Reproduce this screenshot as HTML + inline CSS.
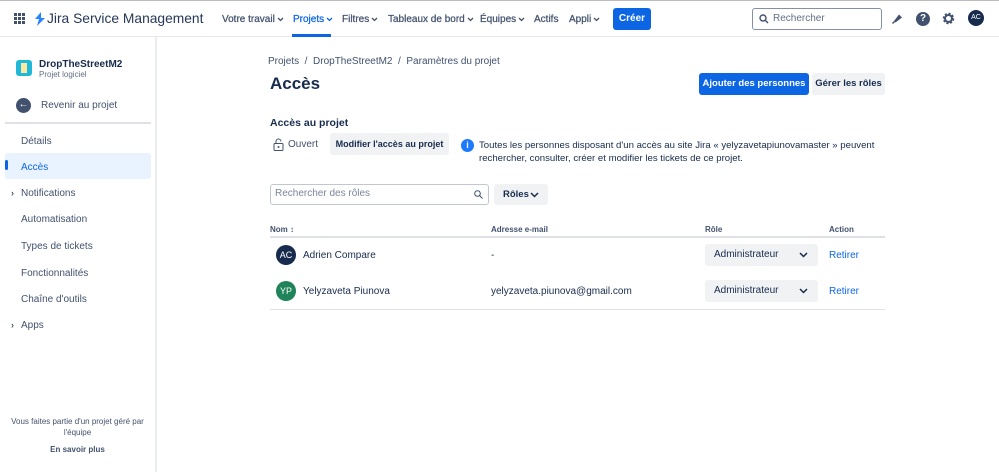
<!DOCTYPE html>
<html><head><meta charset="utf-8"><style>
*{box-sizing:border-box;margin:0;padding:0}
body{width:999px;height:472px;overflow:hidden;font-family:"Liberation Sans",sans-serif;color:#172b4d;background:#fff;position:relative;font-size:11px}
.abs{position:absolute;white-space:nowrap}
.top{position:absolute;left:0;top:0;width:999px;height:37px;border-top:1px solid #bbb;border-bottom:1px solid #e5e7ea}
.nav{position:absolute;top:13px;font-size:10px;color:#42526e;white-space:nowrap;-webkit-text-stroke:0.25px #42526e}
.ch{display:inline-block;vertical-align:middle;margin-left:2px}
.side{position:absolute;left:0;top:37px;width:157px;height:435px;border-right:2px solid #ebecf0}
.si{position:absolute;left:21px;font-size:10px;color:#42526e;white-space:nowrap}
.btn{position:absolute;background:#f1f2f4;border-radius:3px;font-weight:bold;font-size:9.5px;color:#172b4d;text-align:center;white-space:nowrap}
.av{position:absolute;width:20px;height:20px;border-radius:50%;color:#fff;font-size:9px;text-align:center;line-height:20px}
</style></head><body>
<div class="top">
<svg class="abs" style="left:14px;top:12px" width="11" height="11"><g fill="#42526e"><rect x="0" y="0" width="3" height="3"/><rect x="4" y="0" width="3" height="3"/><rect x="8" y="0" width="3" height="3"/><rect x="0" y="4" width="3" height="3"/><rect x="4" y="4" width="3" height="3"/><rect x="8" y="4" width="3" height="3"/><rect x="0" y="8" width="3" height="3"/><rect x="4" y="8" width="3" height="3"/><rect x="8" y="8" width="3" height="3"/></g></svg>
<svg class="abs" style="left:34px;top:11px" width="12" height="14"><path d="M7 0L1 7h4L3 14l8-8H7z" fill="#2684ff"/></svg>
<div class="abs" style="left:47px;top:10px;font-size:13.8px;color:#253858">Jira Service Management</div>
<div class="nav" style="left:222px">Votre travail<svg class="ch" width="7" height="5"><path d="M1 1l2.5 2.5L6 1" stroke="#42526e" stroke-width="1.3" fill="none"/></svg></div>
<div class="nav" style="left:293px;color:#0c66e4;-webkit-text-stroke-color:#0c66e4">Projets<svg class="ch" width="7" height="5"><path d="M1 1l2.5 2.5L6 1" stroke="#0c66e4" stroke-width="1.3" fill="none"/></svg></div>
<div class="abs" style="left:292px;top:33px;width:39px;height:3px;background:#0c66e4"></div>
<div class="nav" style="left:342px">Filtres<svg class="ch" width="7" height="5"><path d="M1 1l2.5 2.5L6 1" stroke="#42526e" stroke-width="1.3" fill="none"/></svg></div>
<div class="nav" style="left:388px">Tableaux de bord<svg class="ch" width="7" height="5"><path d="M1 1l2.5 2.5L6 1" stroke="#42526e" stroke-width="1.3" fill="none"/></svg></div>
<div class="nav" style="left:480px">Équipes<svg class="ch" width="7" height="5"><path d="M1 1l2.5 2.5L6 1" stroke="#42526e" stroke-width="1.3" fill="none"/></svg></div>
<div class="nav" style="left:534px">Actifs</div>
<div class="nav" style="left:569px">Appli<svg class="ch" width="7" height="5"><path d="M1 1l2.5 2.5L6 1" stroke="#42526e" stroke-width="1.3" fill="none"/></svg></div>
<div class="abs" style="left:613px;top:7px;width:38px;height:22px;background:#0c66e4;border-radius:3px;color:#fff;font-weight:bold;font-size:10px;text-align:center;line-height:22px">Créer</div>
<div class="abs" style="left:752px;top:7px;width:130px;height:22px;border:1.5px solid #8590a2;border-radius:3px;color:#626f86;font-size:10px;line-height:19px;padding-left:20px">Rechercher</div>
<svg class="abs" style="left:759px;top:13px" width="10" height="10"><circle cx="4" cy="4" r="3" stroke="#42526e" stroke-width="1.4" fill="none"/><path d="M6.5 6.5L9 9" stroke="#42526e" stroke-width="1.4"/></svg>
<svg class="abs" style="left:891px;top:11px" width="13" height="13"><path d="M3 9L8 2.5l3 3-6.5 5z" fill="#42526e"/><path d="M1.5 11.5l2-2" stroke="#42526e" stroke-width="1.5"/></svg>
<div class="abs" style="left:916px;top:11px;width:14px;height:14px;border-radius:50%;background:#42526e;color:#fff;font-size:10px;font-weight:bold;text-align:center;line-height:14px">?</div>
<svg class="abs" style="left:941px;top:10px" width="15" height="15"><circle cx="7.5" cy="7.5" r="4.5" fill="none" stroke="#42526e" stroke-width="2.5" stroke-dasharray="2 1.5"/><circle cx="7.5" cy="7.5" r="3.5" fill="none" stroke="#42526e" stroke-width="2"/></svg>
<div class="av" style="left:968px;top:9px;width:16px;height:16px;line-height:16px;font-size:7px;background:#172b4d">AC</div>
</div>
<div class="side">
<div class="abs" style="left:16px;top:23px;width:16px;height:16px;background:#1fb8d8;border-radius:3px"></div>
<div class="abs" style="left:21px;top:26px;width:6px;height:10px;background:#ffe7a0"></div>
<div class="abs" style="left:39px;top:22px;font-size:10px;font-weight:bold">DropTheStreetM2</div>
<div class="abs" style="left:39px;top:33px;font-size:8px;color:#626f86">Projet logiciel</div>
<div class="abs" style="left:16px;top:61px;width:15px;height:15px;border-radius:50%;background:#42526e;color:#fff;font-size:10px;text-align:center;line-height:14px">←</div>
<div class="si" style="left:41px;top:63px">Revenir au projet</div>
<div class="abs" style="left:5px;top:85px;width:146px;height:2px;background:#dfe1e6"></div>
<div class="si" style="top:99px">Détails</div>
<div class="abs" style="left:5px;top:116px;width:146px;height:26px;background:#e9f2ff;border-radius:3px"></div>
<div class="abs" style="left:5px;top:123px;width:3px;height:10px;background:#0c66e4;border-radius:2px"></div>
<div class="si" style="top:125px;color:#0c66e4">Accès</div>
<div class="si" style="top:151px"><span style="position:absolute;left:-10px;font-size:9px;font-weight:bold">›</span>Notifications</div>
<div class="si" style="top:177px">Automatisation</div>
<div class="si" style="top:204px">Types de tickets</div>
<div class="si" style="top:231px">Fonctionnalités</div>
<div class="si" style="top:257px">Chaîne d'outils</div>
<div class="si" style="top:283px"><span style="position:absolute;left:-10px;font-size:9px;font-weight:bold">›</span>Apps</div>
<div class="abs" style="left:0;top:379px;width:155px;text-align:center;font-size:8px;color:#42526e;line-height:11px">Vous faites partie d'un projet géré par<br>l'équipe</div>
<div class="abs" style="left:0;top:408px;width:155px;text-align:center;font-size:8px;font-weight:bold;color:#42526e">En savoir plus</div>
</div>
<div class="abs" style="left:268px;top:56px;font-size:10px;color:#42526e">Projets &nbsp;/ &nbsp;DropTheStreetM2 &nbsp;/ &nbsp;Paramètres du projet</div>
<div class="abs" style="left:270px;top:74px;font-size:17px;font-weight:bold">Accès</div>
<div class="abs" style="left:699px;top:73px;width:110px;height:22px;background:#0c66e4;border-radius:3px;color:#fff;font-weight:bold;font-size:9.5px;text-align:center;line-height:22px">Ajouter des personnes</div>
<div class="btn" style="left:812px;top:73px;width:73px;height:22px;line-height:22px">Gérer les rôles</div>
<div class="abs" style="left:270px;top:117px;font-size:10.5px;font-weight:bold">Accès au projet</div>
<svg class="abs" style="left:273px;top:138px" width="11" height="13"><rect x="1" y="5.5" width="9" height="7" rx="1" fill="none" stroke="#42526e"/><path d="M3 5.5V3.5a2.5 2.5 0 015 0" fill="none" stroke="#42526e"/><circle cx="5.5" cy="9" r="1" fill="#42526e"/></svg>
<div class="abs" style="left:288px;top:139px;font-size:10px;color:#42526e">Ouvert</div>
<div class="btn" style="left:330px;top:133px;width:119px;height:22px;line-height:22px;font-size:9px">Modifier l'accès au projet</div>
<div class="abs" style="left:461px;top:139px;width:13px;height:13px;border-radius:50%;background:#1d7afc;color:#fff;font-size:9px;font-weight:bold;text-align:center;line-height:13px">i</div>
<div class="abs" style="left:479px;top:139px;font-size:9.6px;color:#172b4d;line-height:13px">Toutes les personnes disposant d'un accès au site Jira « yelyzavetapiunovamaster » peuvent<br>rechercher, consulter, créer et modifier les tickets de ce projet.</div>
<div class="abs" style="left:270px;top:184px;width:219px;height:21px;border:1.5px solid #c1c7d0;border-radius:3px;font-size:10px;color:#7a869a;padding-left:4px;line-height:18px">Rechercher des rôles</div>
<svg class="abs" style="left:474px;top:190px" width="9" height="9"><circle cx="3.5" cy="3.5" r="2.8" stroke="#42526e" fill="none"/><path d="M5.5 5.5L8.5 8.5" stroke="#42526e"/></svg>
<div class="btn" style="left:494px;top:184px;width:54px;height:21px;line-height:21px;text-align:left;padding-left:9px">Rôles<svg style="position:absolute;left:36px;top:8px" width="9" height="6"><path d="M1 1l3.5 3.5L8 1" stroke="#172b4d" stroke-width="1.5" fill="none"/></svg></div>
<div class="abs" style="left:270px;top:225px;font-size:8px;font-weight:bold;color:#42526e">Nom ↕</div>
<div class="abs" style="left:491px;top:225px;font-size:8px;font-weight:bold;color:#42526e">Adresse e-mail</div>
<div class="abs" style="left:705px;top:225px;font-size:8px;font-weight:bold;color:#42526e">Rôle</div>
<div class="abs" style="left:829px;top:225px;font-size:8px;font-weight:bold;color:#42526e">Action</div>
<div class="abs" style="left:270px;top:236px;width:615px;height:2px;background:#dfe1e6"></div>
<div class="av" style="left:276px;top:245px;background:#172b4d">AC</div>
<div class="abs" style="left:303px;top:250px;font-size:10px">Adrien Compare</div>
<div class="abs" style="left:491px;top:250px;font-size:10px">-</div>
<div class="btn" style="left:705px;top:244px;width:113px;height:22px;line-height:22px;text-align:left;padding-left:9px;font-size:10px;font-weight:normal">Administrateur<svg style="position:absolute;right:10px;top:8px" width="9" height="6"><path d="M1 1l3.5 3.5L8 1" stroke="#172b4d" stroke-width="1.5" fill="none"/></svg></div>
<div class="abs" style="left:829px;top:250px;font-size:10px;color:#0c66e4">Retirer</div>
<div class="av" style="left:276px;top:281px;background:#1f845a">YP</div>
<div class="abs" style="left:303px;top:286px;font-size:10px">Yelyzaveta Piunova</div>
<div class="abs" style="left:491px;top:286px;font-size:10px">yelyzaveta.piunova@gmail.com</div>
<div class="btn" style="left:705px;top:280px;width:113px;height:22px;line-height:22px;text-align:left;padding-left:9px;font-size:10px;font-weight:normal">Administrateur<svg style="position:absolute;right:10px;top:8px" width="9" height="6"><path d="M1 1l3.5 3.5L8 1" stroke="#172b4d" stroke-width="1.5" fill="none"/></svg></div>
<div class="abs" style="left:829px;top:286px;font-size:10px;color:#0c66e4">Retirer</div>
<div class="abs" style="left:270px;top:309px;width:615px;height:1px;background:#dfe1e6"></div>
</body></html>
